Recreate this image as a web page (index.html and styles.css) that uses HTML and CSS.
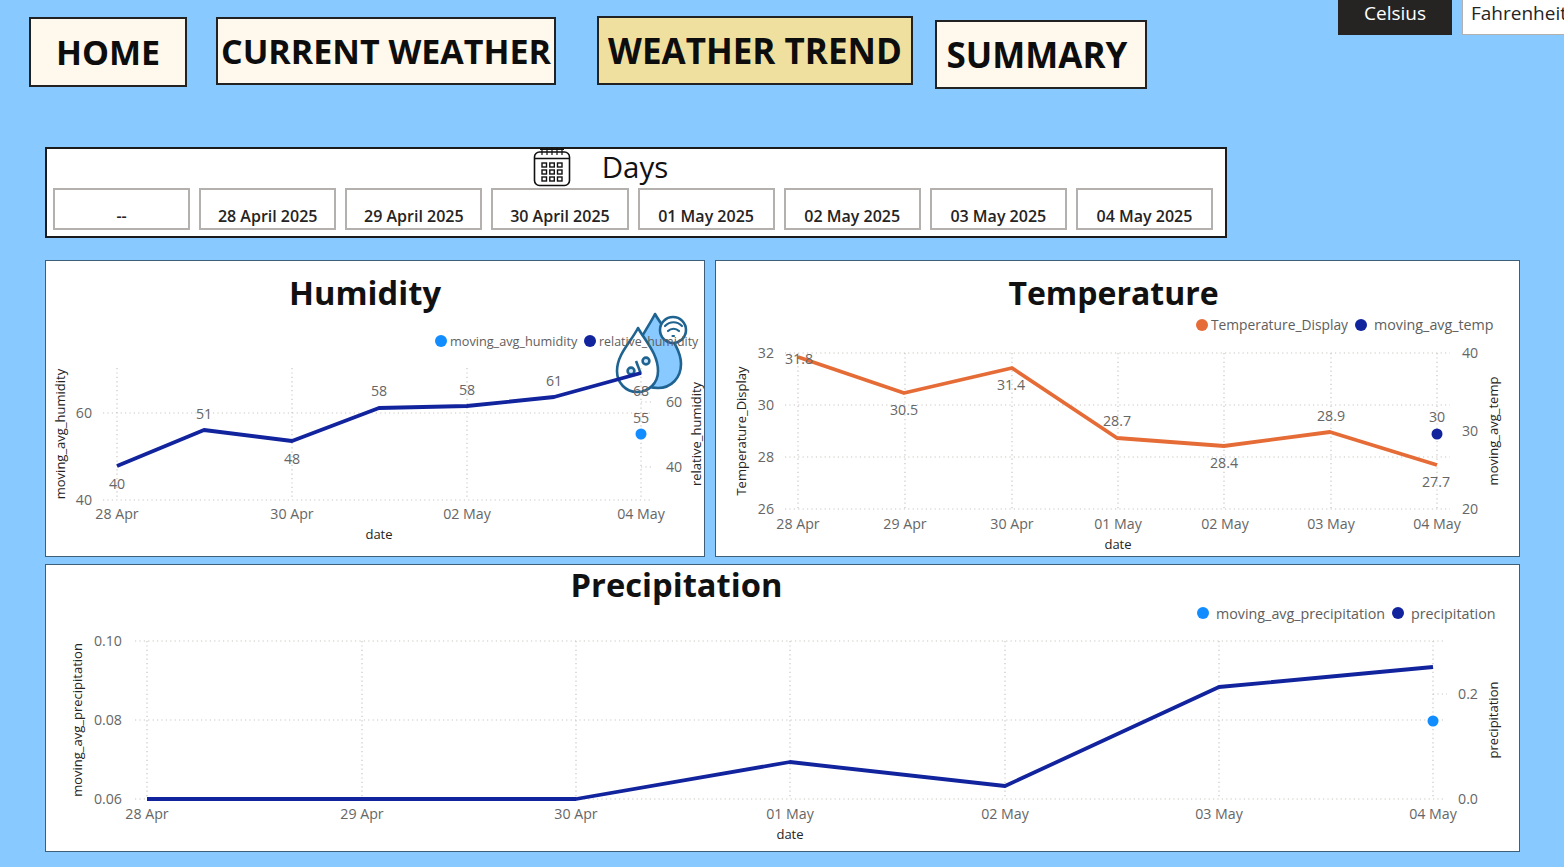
FILE: index.html
```html
<!DOCTYPE html>
<html lang="en">
<head>
  <meta charset="UTF-8">
  <meta name="viewport" content="width=device-width, initial-scale=1.0">
  <link rel="stylesheet" href="styles.css">
  <title>Weather Trend</title>
</head>
<body>

  <div class="topbar">
    <nav class="nav">
      <a class="nav-btn nav-home">HOME</a>
      <a class="nav-btn nav-current">CURRENT WEATHER</a>
      <a class="nav-btn nav-trend">WEATHER TREND</a>
      <a class="nav-btn nav-summary">SUMMARY</a>
    </nav>
    <div class="units">
      <button class="unit unit-on">Celsius</button>
      <button class="unit unit-off">Fahrenheit</button>
    </div>
  </div>

  <section class="days">
    <div class="days-head">
      <svg class="cal" width="38" height="40" viewBox="0 0 38 40" fill="none" stroke="#111" stroke-width="1.6">
        <rect x="1.5" y="5" width="35" height="33.5" rx="5"/>
        <path d="M1.5 11.5H36.5"/>
        <path d="M9 1V8M14 1V8M19 1V8M24 1V8M29 1V8M7 2.5H31" stroke-width="1.2"/>
        <g stroke-width="1.4">
          <rect x="9" y="16" width="4.5" height="4"/><rect x="16.8" y="16" width="4.5" height="4"/><rect x="24.5" y="16" width="4.5" height="4"/>
          <rect x="9" y="23" width="4.5" height="4"/><rect x="16.8" y="23" width="4.5" height="4"/><rect x="24.5" y="23" width="4.5" height="4"/>
          <rect x="9" y="30" width="4.5" height="4"/><rect x="16.8" y="30" width="4.5" height="4"/><rect x="24.5" y="30" width="4.5" height="4"/>
        </g>
      </svg>
      <span class="days-title">Days</span>
    </div>
    <div class="tiles">
      <div class="tile">--</div>
      <div class="tile">28 April 2025</div>
      <div class="tile">29 April 2025</div>
      <div class="tile">30 April 2025</div>
      <div class="tile">01 May 2025</div>
      <div class="tile">02 May 2025</div>
      <div class="tile">03 May 2025</div>
      <div class="tile">04 May 2025</div>
    </div>
  </section>

  <div class="chart-row">
    <section class="panel panel-humidity">
      <h2 class="title">Humidity</h2>
      <svg class="chart" width="658" height="245" viewBox="46 311 658 245">
        <!-- drop icon sits under the chart -->
        <g stroke="#1f6391" stroke-width="2.6" stroke-linejoin="round">
          <path d="M655 314C664 330 681 346 681 364C681 378 671 388 658 388C645 388 633 378 633 364C633 346 647 330 655 314Z" fill="#88c9ff"/>
          <path d="M638 328C646 342 658 354 658 371C658 383 649 392 637 392C626 392 617 383 617 371C617 354 631 342 638 328Z" fill="#fff"/>
          <circle cx="673" cy="330" r="13" fill="#fff"/>
          <circle cx="646" cy="361" r="3.4" fill="#cfe8ff"/>
          <circle cx="631" cy="371" r="3.4" fill="#cfe8ff"/>
          <path d="M636 361L641 374" fill="none"/>
        </g>
        <g fill="none" stroke="#1f6391" stroke-width="2.2" stroke-linecap="round">
          <path d="M665 326C670 321 677 321 682 326"/>
          <path d="M668 331C671 328 676 328 679 331"/>
          <path d="M672.5 336H674"/>
        </g>
        <g class="grid">
          <path d="M103 413H650M103 500H650M641 402H653M641 467H653"/>
          <path d="M117 368V500M292 368V500M467 368V500M641 368V500"/>
        </g>
        <g class="legend">
          <circle cx="441" cy="341" r="6" fill="#118dff"/><text x="450" y="346">moving_avg_humidity</text>
          <circle cx="590" cy="341" r="6" fill="#12239e"/><text class="legend-tight" x="599" y="346">relative_humidity</text>
        </g>
        <g class="axis end">
          <text x="92" y="418">60</text><text x="92" y="505">40</text>
        </g>
        <g class="axis">
          <text x="674" y="407">60</text><text x="674" y="472">40</text>
          <text x="117" y="519">28 Apr</text><text x="292" y="519">30 Apr</text><text x="467" y="519">02 May</text><text x="641" y="519">04 May</text>
        </g>
        <text class="axis-title" transform="translate(65 434) rotate(-90)">moving_avg_humidity</text>
        <text class="axis-title" transform="translate(701 434) rotate(-90)">relative_humidity</text>
        <text class="axis-title" x="379" y="539">date</text>
        <polyline class="line navy" points="117,466 204,430 292,441 379,408 467,406 554,397 641,373"/>
        <circle cx="641" cy="434" r="5.5" fill="#118dff"/>
        <g class="axis">
          <text x="117" y="489">40</text><text x="204" y="419">51</text><text x="292" y="464">48</text><text x="379" y="396">58</text>
          <text x="467" y="395">58</text><text x="554" y="386">61</text><text x="641" y="396">68</text><text x="641" y="423">55</text>
        </g>
      </svg>
    </section>

    <section class="panel panel-temp">
      <h2 class="title">Temperature</h2>
      <svg class="chart" width="803" height="245" viewBox="716 311 803 245">
        <g class="grid">
          <path d="M785 353H1450M785 405H1450M785 457H1450M785 509H1450"/>
          <path d="M798 353V509M905 353V509M1012 353V509M1118 353V509M1224 353V509M1331 353V509M1437 353V509"/>
        </g>
        <g class="legend legend-large">
          <circle cx="1202" cy="325" r="6" fill="#e66c37"/><text x="1211" y="330">Temperature_Display</text>
          <circle cx="1361" cy="325" r="6" fill="#12239e"/><text class="legend-stretch" x="1374" y="330">moving_avg_temp</text>
        </g>
        <g class="axis end">
          <text x="774" y="358">32</text><text x="774" y="410">30</text><text x="774" y="462">28</text><text x="774" y="514">26</text>
        </g>
        <g class="axis">
          <text x="1470" y="358">40</text><text x="1470" y="436">30</text><text x="1470" y="514">20</text>
          <text x="798" y="529">28 Apr</text><text x="905" y="529">29 Apr</text><text x="1012" y="529">30 Apr</text><text x="1118" y="529">01 May</text>
          <text x="1225" y="529">02 May</text><text x="1331" y="529">03 May</text><text x="1437" y="529">04 May</text>
        </g>
        <text class="axis-title" transform="translate(746 431) rotate(-90)">Temperature_Display</text>
        <text class="axis-title" transform="translate(1498 431) rotate(-90)">moving_avg_temp</text>
        <text class="axis-title" x="1118" y="549">date</text>
        <polyline class="line orange" points="798,357 904,393 1012,368 1117,438 1224,446 1330,432 1437,465"/>
        <circle cx="1437" cy="434" r="5.5" fill="#12239e"/>
        <g class="axis">
          <text x="799" y="364">31.8</text><text x="904" y="415">30.5</text><text x="1011" y="390">31.4</text><text x="1117" y="426">28.7</text>
          <text x="1224" y="468">28.4</text><text x="1331" y="421">28.9</text><text x="1437" y="422">30</text><text x="1436" y="487">27.7</text>
        </g>
      </svg>
    </section>
  </div>

  <section class="panel panel-precip">
    <h2 class="title">Precipitation</h2>
    <svg class="chart" width="1473" height="253" viewBox="46 598 1473 253">
      <g class="grid">
        <path d="M135 641H1445M135 720H1445M135 799H1445M1433 694H1447"/>
        <path d="M147 641V799M362 641V799M576 641V799M790 641V799M1005 641V799M1219 641V799M1433 641V799"/>
      </g>
      <g class="legend legend-large">
        <circle cx="1203" cy="613" r="6" fill="#118dff"/><text class="legend-stretch" x="1216" y="619">moving_avg_precipitation</text>
        <circle cx="1398" cy="613" r="6" fill="#12239e"/><text class="legend-stretch" x="1411" y="619">precipitation</text>
      </g>
      <g class="axis end">
        <text x="122" y="646">0.10</text><text x="122" y="725">0.08</text><text x="122" y="804">0.06</text>
      </g>
      <g class="axis">
        <text x="1468" y="699">0.2</text><text x="1468" y="804">0.0</text>
        <text x="147" y="819">28 Apr</text><text x="362" y="819">29 Apr</text><text x="576" y="819">30 Apr</text><text x="790" y="819">01 May</text>
        <text x="1005" y="819">02 May</text><text x="1219" y="819">03 May</text><text x="1433" y="819">04 May</text>
      </g>
      <text class="axis-title" transform="translate(82 720) rotate(-90)">moving_avg_precipitation</text>
      <text class="axis-title" transform="translate(1498 720) rotate(-90)">precipitation</text>
      <text class="axis-title" x="790" y="839">date</text>
      <polyline class="line navy" points="147,799 362,799 576,799 790,762 1005,786 1219,687 1433,667"/>
      <circle cx="1433" cy="721" r="5.5" fill="#118dff"/>
    </svg>
  </section>

</body>
</html>
```

FILE: styles.css
```css
html, body {
  margin: 0;
  height: 867px;
  overflow: hidden;
}

body {
  font-family: 'Open Sans', 'Noto Sans', sans-serif;
  background: #88c9ff;
  color: #111;
}

.topbar {
  display: flex;
  justify-content: space-between;
  align-items: flex-start;
  height: 147px;
}

.nav {
  display: flex;
  align-items: flex-start;
  padding: 16px 0 0 29px;
}

.nav-btn {
  display: flex;
  align-items: center;
  justify-content: center;
  box-sizing: border-box;
  border: 2px solid #222;
  background: #fff8ec;
  font-weight: 700;
  color: #0d0d0d;
  white-space: nowrap;
}

.nav-home {
  width: 158px;
  height: 70px;
  margin-top: 1px;
  font-size: 34px;
}

.nav-current {
  width: 340px;
  height: 68px;
  margin: 1px 0 0 29px;
  font-size: 34px;
}

.nav-trend {
  width: 316px;
  height: 69px;
  margin-left: 41px;
  background: #f0e09f;
  font-size: 35px;
}

.nav-summary {
  width: 212px;
  height: 69px;
  margin: 4px 0 0 22px;
  padding-right: 8px;
  font-size: 35px;
}

.units {
  display: flex;
  gap: 10px;
  width: 226px;
  flex-shrink: 0;
  overflow: hidden;
}

.unit {
  flex-shrink: 0;
  box-sizing: border-box;
  height: 35px;
  width: 114px;
  padding: 0 0 14px;
  border: 0;
  font-family: inherit;
  font-size: 19px;
  font-weight: 500;
}

.unit-on {
  background: #252423;
  color: #fff;
}

.unit-off {
  background: #fff;
  color: #252423;
  border: 1px solid #b3b0ad;
  border-top: 0;
  text-align: left;
  padding-left: 8px;
  white-space: nowrap;
}

.days {
  box-sizing: border-box;
  width: 1182px;
  height: 91px;
  margin-left: 45px;
  background: #fff;
  border: 2px solid #1b1b1b;
}

.days-head {
  display: flex;
  align-items: center;
  justify-content: center;
  gap: 31px;
  height: 39px;
  padding: 0 71px 4px 0;
  box-sizing: border-box;
}

.days-title {
  font-size: 29.5px;
  line-height: 34px;
}

.tiles {
  display: grid;
  grid-template-columns: repeat(8, 1fr);
  gap: 9px;
  width: 1160px;
  margin-left: 6px;
}

.tile {
  box-sizing: border-box;
  height: 42px;
  padding-top: 15px;
  border: 2px solid #b3b0ad;
  text-align: center;
  font-size: 16px;
  font-weight: 600;
  line-height: 22px;
  color: #252423;
}

.chart-row {
  display: flex;
  gap: 10px;
  margin: 22px 0 7px 45px;
}

.panel {
  box-sizing: border-box;
  height: 297px;
  background: #fff;
  border: 1px solid #3f5f78;
}

.panel-humidity {
  width: 660px;
}

.panel-temp {
  width: 805px;
}

.panel-precip {
  width: 1475px;
  height: 288px;
  margin-left: 45px;
}

.title {
  margin: 0;
  height: 50px;
  font-size: 32.7px;
  line-height: 64px;
  font-weight: 700;
  text-align: center;
  color: #111;
}

.panel-humidity .title {
  padding-right: 20px;
}

.panel-temp .title {
  padding-right: 8px;
  font-size: 32px;
}

.panel-precip .title {
  height: 33px;
  line-height: 40px;
  padding-right: 212px;
}

.chart {
  display: block;
}

.grid path {
  fill: none;
  stroke: #c8c6c4;
  stroke-width: 1.2;
  stroke-dasharray: 1.2 3.2;
}

.line {
  fill: none;
  stroke-width: 3.8;
  stroke-linejoin: round;
}

.navy {
  stroke: #12239e;
}

.orange {
  stroke: #e66c37;
}

.axis text {
  font-size: 14.2px;
  fill: #666;
  text-anchor: middle;
}

.axis.end text {
  text-anchor: end;
}

.legend text {
  font-size: 12.7px;
  fill: #605e5c;
}

.legend .legend-tight {
  font-size: 12.4px;
}

.legend-large text {
  font-size: 13.8px;
}

.legend-large .legend-stretch {
  font-size: 14.3px;
}

.axis-title {
  font-size: 13px;
  fill: #252423;
  text-anchor: middle;
}
```
